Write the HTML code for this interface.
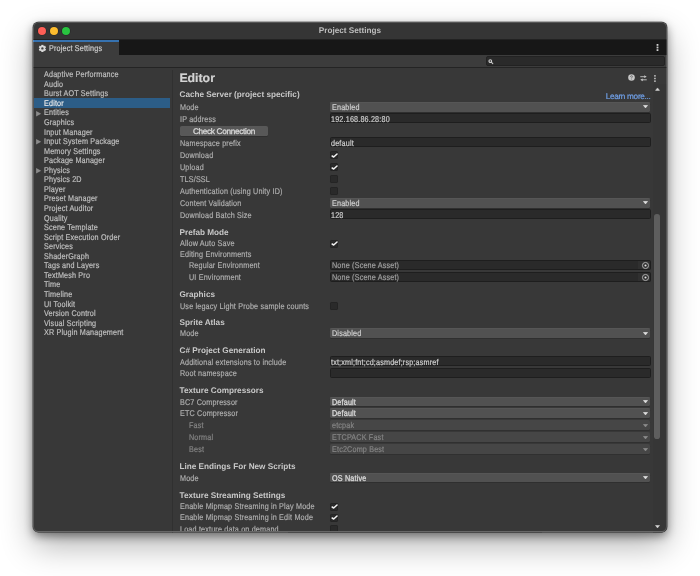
<!DOCTYPE html>
<html><head><meta charset="utf-8">
<style>
html,body{margin:0;padding:0;width:700px;height:576px;overflow:hidden;background:#ffffff;}
*{box-sizing:border-box;}
body{font-family:"Liberation Sans",sans-serif;position:relative;text-rendering:geometricPrecision;}
.shadow{position:absolute;left:33px;top:22px;width:634.2px;height:510.4px;border-radius:5.5px;background:#383838;
  box-shadow:0 0 0 0.6px rgba(0,0,0,0.5), 0 4px 10px rgba(0,0,0,0.45), 0 14px 32px rgba(0,0,0,0.3);}
.win{position:absolute;left:0;top:0;width:700px;height:576px;clip-path:inset(22px 32.8px 43.6px 33px round 5.5px);will-change:transform;}
.abs{position:absolute;}
.tx{position:absolute;font-size:8.4px;line-height:12px;height:12px;color:#c0c0c0;white-space:nowrap;transform:scaleX(0.86);transform-origin:0 0;letter-spacing:0.2px;-webkit-text-stroke:0.18px currentColor;}
.tx.lbl{color:#b0b0b0;}
.tx.dis{color:#868686;}
.tx.ctl{color:#d2d2d2;}
.tx.obt{color:#a2a2a2;}
.tx.selt{color:#e8e8e8;}
.hd{position:absolute;left:179.5px;font-size:8.2px;font-weight:bold;line-height:12px;height:12px;color:#c8c8c8;white-space:nowrap;}
.title{position:absolute;left:33px;top:22px;width:634px;height:16.7px;background:#353535;}
.dot{position:absolute;top:27.1px;width:8px;height:8px;border-radius:50%;box-shadow:0 0 0 0.6px rgba(0,0,0,0.3);}
.tabbar{position:absolute;left:33px;top:38.7px;width:634px;height:16px;background:#171717;border-top:1px solid #222;}
.tab{position:absolute;left:33px;top:39.8px;width:86.3px;height:14.9px;background:#3c3c3c;border-top:2px solid #3672b0;}
.toolbar{position:absolute;left:33px;top:54.65px;width:634px;height:13.15px;background:#3c3c3c;border-bottom:1px solid #242424;}
.search{position:absolute;left:486px;top:56.1px;width:178.6px;height:9.9px;background:#2a2a2a;border-radius:2px;border:0.6px solid #222;}
.side{position:absolute;left:171.7px;top:69.5px;width:1.6px;height:470px;background:#303030;}
.sel{left:33.8px;width:135.9px;height:10px;background:#2c5d87;}
.arr{position:absolute;left:35.9px;width:0;height:0;border-left:4.9px solid #858585;border-top:2.75px solid transparent;border-bottom:2.75px solid transparent;}
.btn{position:absolute;left:180px;width:88px;height:10px;background:#585858;border-radius:1.5px;text-align:center;font-size:8.2px;color:#d8d8d8;line-height:10px;box-shadow:0 0.6px 0 #262626;letter-spacing:-0.3px;-webkit-text-stroke:0.3px currentColor;}
.dd{position:absolute;left:330.1px;width:320.4px;height:9.5px;background:#515151;border-radius:1.5px;box-shadow:0 0.7px 0 #2c2c2c, inset 0 0.5px 0 #5c5c5c;}
.dd.dis{background:#464646;box-shadow:0 0.7px 0 #2e2e2e;}
.tf{position:absolute;left:330.1px;width:320.6px;height:10px;background:#2a2a2a;border-radius:1.5px;border:0.6px solid #1e1e1e;}
.ob{position:absolute;right:0;top:0;width:11.3px;height:100%;background:#303030;border-radius:0 1.5px 1.5px 0;}
.cb{position:absolute;left:330.2px;width:7.6px;height:8px;background:#2a2a2a;border-radius:1.2px;border:0.6px solid #242424;}
.link{position:absolute;left:605.7px;font-size:8.2px;line-height:12px;color:#70a0e8;white-space:nowrap;letter-spacing:-0.3px;-webkit-text-stroke:0.2px currentColor;}
</style></head>
<body>
<div class="shadow"></div>
<div class="win">
  <div class="title"></div>
  <div class="dot" style="left:37.9px;background:#fe5f57;"></div>
  <div class="dot" style="left:49.6px;background:#fdbc2e;"></div>
  <div class="dot" style="left:61.7px;background:#29c440;"></div>
  <div class="abs" style="left:33px;width:634px;top:25.00px;line-height:12px;text-align:center;font-weight:bold;font-size:8.2px;color:#bdbdbd;">Project Settings</div>
  <div class="tabbar"></div>
  <div class="tab"></div>
  <svg class="abs" width="8" height="8" viewBox="0 0 16 16" style="left:38px;top:44px;transform:translate(0.4px,0.4px)"><path fill="#d8d8d8" fill-rule="evenodd" d="M10.28 2.88 L10.22 0.73 L5.78 0.73 L5.72 2.88 L4.71 3.47 L2.82 2.44 L0.59 6.29 L2.43 7.41 L2.43 8.59 L0.59 9.71 L2.82 13.56 L4.71 12.53 L5.72 13.12 L5.78 15.27 L10.22 15.27 L10.28 13.12 L11.29 12.53 L13.18 13.56 L15.41 9.71 L13.57 8.59 L13.57 7.41 L15.41 6.29 L13.18 2.44 L11.29 3.47 Z M8 5.6 A2.4 2.4 0 1 0 8 10.4 A2.4 2.4 0 1 0 8 5.6 Z"/></svg>
  <div class="tx" style="left:48.6px;top:42.00px;color:#d0d0d0;">Project Settings</div>
  <svg class="abs" style="left:656px;top:43.6px" width="3" height="7" viewBox="0 0 3 7"><rect x="0.6" y="0" width="1.8" height="1.8" fill="#d0d0d0"/><rect x="0.6" y="2.6" width="1.8" height="1.8" fill="#d0d0d0"/><rect x="0.6" y="5.2" width="1.8" height="1.8" fill="#d0d0d0"/></svg>
  <div class="toolbar"></div>
  <div class="search"></div>
  <svg class="abs" style="left:487.6px;top:58.6px" width="6" height="6" viewBox="0 0 12 12"><circle cx="4.6" cy="4.2" r="2.7" stroke="#cccccc" stroke-width="2.2" fill="none"/><path d="M6.6 6.4 L9.6 9.4" stroke="#cccccc" stroke-width="2.2" stroke-linecap="round"/></svg>
  <div class="side"></div>
  <div class="abs" style="left:652.6px;top:84px;width:14px;height:450px;background:#363636;"></div>
  <div class="abs" style="left:654.2px;top:214.3px;width:5.6px;height:225px;background:#5e5e5e;border-radius:2.8px;"></div>
  <svg class="abs" style="left:654.5px;top:87.2px" width="5" height="4" viewBox="0 0 5 4"><path d="M0.5 3.4 L4.5 3.4 L2.5 0.9 Z" fill="#d8d8d8" stroke="#d8d8d8" stroke-width="0.5" stroke-linejoin="round"/></svg>
  <svg class="abs" style="left:654.5px;top:524.8px" width="5" height="4" viewBox="0 0 5 4"><path d="M0.5 0.5 L4.5 0.5 L2.5 2.9 Z" fill="#d8d8d8" stroke="#d8d8d8" stroke-width="0.5" stroke-linejoin="round"/></svg>
  <div class="abs" style="left:179.4px;top:70.5px;font-size:12.3px;font-weight:bold;color:#d4d4d4;white-space:nowrap;line-height:14px;-webkit-text-stroke:0.2px currentColor;">Editor</div>
  <div class="link" style="top:91px">Learn more...</div>
  <svg class="abs" style="left:628.3px;top:74.3px" width="7" height="7" viewBox="0 0 14 14"><circle cx="7" cy="7" r="6.6" fill="#c6c6c6"/><path d="M5.2 5.2 C5.2 4 6 3.4 7 3.4 C8 3.4 8.8 4 8.8 5 C8.8 6.2 7.3 6.4 7.1 7.8" stroke="#4a4a4a" stroke-width="1.3" fill="none" stroke-linecap="round"/><circle cx="7.1" cy="10.2" r="0.8" fill="#4a4a4a"/></svg>
  <svg class="abs" style="left:640px;top:75px" width="7" height="7" viewBox="0 0 14 14"><path d="M0.5 3.4 H9" stroke="#cfcfcf" stroke-width="1.7" fill="none"/><path d="M8.5 0.6 L13.4 3.4 L8.5 6.2 Z" fill="#cfcfcf"/><path d="M13.5 9.6 H5" stroke="#cfcfcf" stroke-width="1.7" fill="none"/><path d="M5.5 6.8 L0.6 9.6 L5.5 12.4 Z" fill="#cfcfcf"/></svg>
  <svg class="abs" style="left:653.6px;top:74.5px" width="2" height="7" viewBox="0 0 2 7"><rect x="0.2" y="0.1" width="1.5" height="1.5" fill="#cccccc"/><rect x="0.2" y="2.75" width="1.5" height="1.5" fill="#cccccc"/><rect x="0.2" y="5.4" width="1.5" height="1.5" fill="#cccccc"/></svg>
<div class="tx" style="left:43.65px;top:68.00px">Adaptive Performance</div>
<div class="tx" style="left:43.65px;top:78.00px">Audio</div>
<div class="tx" style="left:43.65px;top:87.00px">Burst AOT Settings</div>
<div class="abs sel" style="top:98px;"></div>
<div class="tx selt" style="left:43.65px;top:97.00px">Editor</div>
<svg class="abs" style="left:35.7px;top:110.80px" width="6" height="6" viewBox="0 0 6 6"><path d="M0.1 0.1 L5.2 2.85 L0.1 5.6 Z" fill="#8a8a8a"/></svg>
<div class="tx" style="left:43.65px;top:106.00px">Entities</div>
<div class="tx" style="left:43.65px;top:116.00px">Graphics</div>
<div class="tx" style="left:43.65px;top:126.00px">Input Manager</div>
<svg class="abs" style="left:35.7px;top:139.46px" width="6" height="6" viewBox="0 0 6 6"><path d="M0.1 0.1 L5.2 2.85 L0.1 5.6 Z" fill="#8a8a8a"/></svg>
<div class="tx" style="left:43.65px;top:135.00px">Input System Package</div>
<div class="tx" style="left:43.65px;top:145.00px">Memory Settings</div>
<div class="tx" style="left:43.65px;top:154.00px">Package Manager</div>
<svg class="abs" style="left:35.7px;top:168.13px" width="6" height="6" viewBox="0 0 6 6"><path d="M0.1 0.1 L5.2 2.85 L0.1 5.6 Z" fill="#8a8a8a"/></svg>
<div class="tx" style="left:43.65px;top:164.00px">Physics</div>
<div class="tx" style="left:43.65px;top:173.00px">Physics 2D</div>
<div class="tx" style="left:43.65px;top:183.00px">Player</div>
<div class="tx" style="left:43.65px;top:192.00px">Preset Manager</div>
<div class="tx" style="left:43.65px;top:202.00px">Project Auditor</div>
<div class="tx" style="left:43.65px;top:212.00px">Quality</div>
<div class="tx" style="left:43.65px;top:221.00px">Scene Template</div>
<div class="tx" style="left:43.65px;top:231.00px">Script Execution Order</div>
<div class="tx" style="left:43.65px;top:240.00px">Services</div>
<div class="tx" style="left:43.65px;top:250.00px">ShaderGraph</div>
<div class="tx" style="left:43.65px;top:259.00px">Tags and Layers</div>
<div class="tx" style="left:43.65px;top:269.00px">TextMesh Pro</div>
<div class="tx" style="left:43.65px;top:278.00px">Time</div>
<div class="tx" style="left:43.65px;top:288.00px">Timeline</div>
<div class="tx" style="left:43.65px;top:298.00px">UI Toolkit</div>
<div class="tx" style="left:43.65px;top:307.00px">Version Control</div>
<div class="tx" style="left:43.65px;top:317.00px">Visual Scripting</div>
<div class="tx" style="left:43.65px;top:326.00px">XR Plugin Management</div>
<div class="hd" style="top:89.00px">Cache Server (project specific)</div>
<div class="tx lbl" style="left:179.6px;top:101.00px">Mode</div>
<div class="dd" style="top:102.00px"><svg width="5" height="4" viewBox="0 0 5 4" style="position:absolute;right:2.7px;top:3.4px"><path d="M0.5 0.5 L4.5 0.5 L2.5 2.9 Z" fill="#dedede" stroke="#dedede" stroke-width="0.7" stroke-linejoin="round"/></svg></div>
<div class="tx ctl" style="left:331.8px;top:101.00px"><span>Enabled</span></div>
<div class="tx lbl" style="left:179.6px;top:113.00px">IP address</div>
<div class="tf" style="top:113.40px"></div>
<div class="tx ctl" style="left:331.2px;top:113.00px">192.168.86.28:80</div>
<div class="btn" style="top:126.2px;line-height:11.8px">Check Connection</div>
<div class="tx lbl" style="left:179.6px;top:137.00px">Namespace prefix</div>
<div class="tf" style="top:137.40px"></div>
<div class="tx ctl" style="left:331.2px;top:137.00px">default</div>
<div class="tx lbl" style="left:179.6px;top:149.00px">Download</div>
<div class="cb" style="top:151.30px"><svg width="8" height="8" viewBox="0 0 8 8" style="position:absolute;left:-0.6px;top:-0.6px;overflow:visible"><path d="M1.2 4.0 L2.7 5.0 L6.0 2.0" stroke="#111" stroke-width="2.7" fill="none" stroke-linecap="round" stroke-linejoin="round" opacity="0.55"/><path d="M1.2 4.0 L2.7 5.0 L6.0 2.0" stroke="#f0f0f0" stroke-width="1.65" fill="none" stroke-linecap="round" stroke-linejoin="round"/></svg></div>
<div class="tx lbl" style="left:179.6px;top:161.00px">Upload</div>
<div class="cb" style="top:163.30px"><svg width="8" height="8" viewBox="0 0 8 8" style="position:absolute;left:-0.6px;top:-0.6px;overflow:visible"><path d="M1.2 4.0 L2.7 5.0 L6.0 2.0" stroke="#111" stroke-width="2.7" fill="none" stroke-linecap="round" stroke-linejoin="round" opacity="0.55"/><path d="M1.2 4.0 L2.7 5.0 L6.0 2.0" stroke="#f0f0f0" stroke-width="1.65" fill="none" stroke-linecap="round" stroke-linejoin="round"/></svg></div>
<div class="tx lbl" style="left:179.6px;top:173.00px">TLS/SSL</div>
<div class="cb" style="top:175.30px"></div>
<div class="tx lbl" style="left:179.6px;top:185.00px">Authentication (using Unity ID)</div>
<div class="cb" style="top:187.30px"></div>
<div class="tx lbl" style="left:179.6px;top:197.00px">Content Validation</div>
<div class="dd" style="top:198.00px"><svg width="5" height="4" viewBox="0 0 5 4" style="position:absolute;right:2.7px;top:3.4px"><path d="M0.5 0.5 L4.5 0.5 L2.5 2.9 Z" fill="#dedede" stroke="#dedede" stroke-width="0.7" stroke-linejoin="round"/></svg></div>
<div class="tx ctl" style="left:331.8px;top:197.00px"><span>Enabled</span></div>
<div class="tx lbl" style="left:179.6px;top:209.00px">Download Batch Size</div>
<div class="tf" style="top:209.40px"></div>
<div class="tx ctl" style="left:331.2px;top:209.00px">128</div>
<div class="hd" style="top:227.00px">Prefab Mode</div>
<div class="tx lbl" style="left:179.6px;top:237.00px">Allow Auto Save</div>
<div class="cb" style="top:239.50px"><svg width="8" height="8" viewBox="0 0 8 8" style="position:absolute;left:-0.6px;top:-0.6px;overflow:visible"><path d="M1.2 4.0 L2.7 5.0 L6.0 2.0" stroke="#111" stroke-width="2.7" fill="none" stroke-linecap="round" stroke-linejoin="round" opacity="0.55"/><path d="M1.2 4.0 L2.7 5.0 L6.0 2.0" stroke="#f0f0f0" stroke-width="1.65" fill="none" stroke-linecap="round" stroke-linejoin="round"/></svg></div>
<div class="tx lbl" style="left:179.6px;top:248.00px">Editing Environments</div>
<div class="tx lbl" style="left:188.9px;top:259.00px">Regular Environment</div>
<div class="tf" style="top:260.30px"><div class="ob"><svg width="9" height="9" viewBox="0 0 9 9" style="position:absolute;left:2.4px;top:-0.3px"><circle cx="4.5" cy="4.5" r="3.05" stroke="#b4b4b4" stroke-width="0.95" fill="none"/><circle cx="4.5" cy="4.5" r="1.05" fill="#e6e6e6"/></svg></div></div>
<div class="tx obt" style="left:331.9px;top:259.00px">None (Scene Asset)</div>
<div class="tx lbl" style="left:188.9px;top:271.00px">UI Environment</div>
<div class="tf" style="top:272.10px"><div class="ob"><svg width="9" height="9" viewBox="0 0 9 9" style="position:absolute;left:2.4px;top:-0.3px"><circle cx="4.5" cy="4.5" r="3.05" stroke="#b4b4b4" stroke-width="0.95" fill="none"/><circle cx="4.5" cy="4.5" r="1.05" fill="#e6e6e6"/></svg></div></div>
<div class="tx obt" style="left:331.9px;top:271.00px">None (Scene Asset)</div>
<div class="hd" style="top:289.00px">Graphics</div>
<div class="tx lbl" style="left:179.6px;top:300.00px">Use legacy Light Probe sample counts</div>
<div class="cb" style="top:302.00px"></div>
<div class="hd" style="top:317.00px">Sprite Atlas</div>
<div class="tx lbl" style="left:179.6px;top:327.00px">Mode</div>
<div class="dd" style="top:328.40px"><svg width="5" height="4" viewBox="0 0 5 4" style="position:absolute;right:2.7px;top:3.4px"><path d="M0.5 0.5 L4.5 0.5 L2.5 2.9 Z" fill="#dedede" stroke="#dedede" stroke-width="0.7" stroke-linejoin="round"/></svg></div>
<div class="tx ctl" style="left:331.8px;top:327.00px"><span>Disabled</span></div>
<div class="hd" style="top:345.00px">C# Project Generation</div>
<div class="tx lbl" style="left:179.6px;top:356.00px">Additional extensions to include</div>
<div class="tf" style="top:356.20px"></div>
<div class="tx ctl" style="left:331.2px;top:356.00px">txt;xml;fnt;cd;asmdef;rsp;asmref</div>
<div class="tx lbl" style="left:179.6px;top:367.00px">Root namespace</div>
<div class="tf" style="top:367.90px"></div>
<div class="hd" style="top:385.00px">Texture Compressors</div>
<div class="tx lbl" style="left:179.6px;top:396.00px">BC7 Compressor</div>
<div class="dd" style="top:396.70px"><svg width="5" height="4" viewBox="0 0 5 4" style="position:absolute;right:2.7px;top:3.4px"><path d="M0.5 0.5 L4.5 0.5 L2.5 2.9 Z" fill="#dedede" stroke="#dedede" stroke-width="0.7" stroke-linejoin="round"/></svg></div>
<div class="tx ctl" style="left:331.8px;top:396.00px"><span style="-webkit-text-stroke:0.32px currentColor;color:#dadada">Default</span></div>
<div class="tx lbl" style="left:179.6px;top:407.00px">ETC Compressor</div>
<div class="dd" style="top:408.40px"><svg width="5" height="4" viewBox="0 0 5 4" style="position:absolute;right:2.7px;top:3.4px"><path d="M0.5 0.5 L4.5 0.5 L2.5 2.9 Z" fill="#dedede" stroke="#dedede" stroke-width="0.7" stroke-linejoin="round"/></svg></div>
<div class="tx ctl" style="left:331.8px;top:407.00px"><span style="-webkit-text-stroke:0.32px currentColor;color:#dadada">Default</span></div>
<div class="tx dis" style="left:188.9px;top:419.00px">Fast</div>
<div class="dd dis" style="top:420.40px"><svg width="5" height="4" viewBox="0 0 5 4" style="position:absolute;right:2.7px;top:3.4px"><path d="M0.5 0.5 L4.5 0.5 L2.5 2.9 Z" fill="#8c8c8c" stroke="#8c8c8c" stroke-width="0.7" stroke-linejoin="round"/></svg></div>
<div class="tx dis" style="left:331.8px;top:419.00px"><span>etcpak</span></div>
<div class="tx dis" style="left:188.9px;top:431.00px">Normal</div>
<div class="dd dis" style="top:432.40px"><svg width="5" height="4" viewBox="0 0 5 4" style="position:absolute;right:2.7px;top:3.4px"><path d="M0.5 0.5 L4.5 0.5 L2.5 2.9 Z" fill="#8c8c8c" stroke="#8c8c8c" stroke-width="0.7" stroke-linejoin="round"/></svg></div>
<div class="tx dis" style="left:331.8px;top:431.00px"><span>ETCPACK Fast</span></div>
<div class="tx dis" style="left:188.9px;top:443.00px">Best</div>
<div class="dd dis" style="top:444.40px"><svg width="5" height="4" viewBox="0 0 5 4" style="position:absolute;right:2.7px;top:3.4px"><path d="M0.5 0.5 L4.5 0.5 L2.5 2.9 Z" fill="#8c8c8c" stroke="#8c8c8c" stroke-width="0.7" stroke-linejoin="round"/></svg></div>
<div class="tx dis" style="left:331.8px;top:443.00px"><span>Etc2Comp Best</span></div>
<div class="hd" style="top:461.00px">Line Endings For New Scripts</div>
<div class="tx lbl" style="left:179.6px;top:472.00px">Mode</div>
<div class="dd" style="top:472.90px"><svg width="5" height="4" viewBox="0 0 5 4" style="position:absolute;right:2.7px;top:3.4px"><path d="M0.5 0.5 L4.5 0.5 L2.5 2.9 Z" fill="#dedede" stroke="#dedede" stroke-width="0.7" stroke-linejoin="round"/></svg></div>
<div class="tx ctl" style="left:331.8px;top:472.00px"><span style="-webkit-text-stroke:0.32px currentColor;color:#dadada">OS Native</span></div>
<div class="hd" style="top:490.00px">Texture Streaming Settings</div>
<div class="tx lbl" style="left:179.6px;top:500.00px">Enable Mipmap Streaming in Play Mode</div>
<div class="cb" style="top:502.50px"><svg width="8" height="8" viewBox="0 0 8 8" style="position:absolute;left:-0.6px;top:-0.6px;overflow:visible"><path d="M1.2 4.0 L2.7 5.0 L6.0 2.0" stroke="#111" stroke-width="2.7" fill="none" stroke-linecap="round" stroke-linejoin="round" opacity="0.55"/><path d="M1.2 4.0 L2.7 5.0 L6.0 2.0" stroke="#f0f0f0" stroke-width="1.65" fill="none" stroke-linecap="round" stroke-linejoin="round"/></svg></div>
<div class="tx lbl" style="left:179.6px;top:511.00px">Enable Mipmap Streaming in Edit Mode</div>
<div class="cb" style="top:513.90px"><svg width="8" height="8" viewBox="0 0 8 8" style="position:absolute;left:-0.6px;top:-0.6px;overflow:visible"><path d="M1.2 4.0 L2.7 5.0 L6.0 2.0" stroke="#111" stroke-width="2.7" fill="none" stroke-linecap="round" stroke-linejoin="round" opacity="0.55"/><path d="M1.2 4.0 L2.7 5.0 L6.0 2.0" stroke="#f0f0f0" stroke-width="1.65" fill="none" stroke-linecap="round" stroke-linejoin="round"/></svg></div>
<div class="tx lbl" style="left:179.6px;top:523.00px">Load texture data on demand</div>
<div class="cb" style="top:525.30px"></div>
  <div class="abs" style="left:33px;top:530.9px;width:634.2px;height:3px;background:#4a4a4a;"></div>
  <div class="abs" style="left:33px;top:22px;width:634.2px;height:510.4px;border-radius:5.5px;box-shadow:inset 0 0 0 1px rgba(255,255,255,0.16);"></div>
</div>
</body></html>
